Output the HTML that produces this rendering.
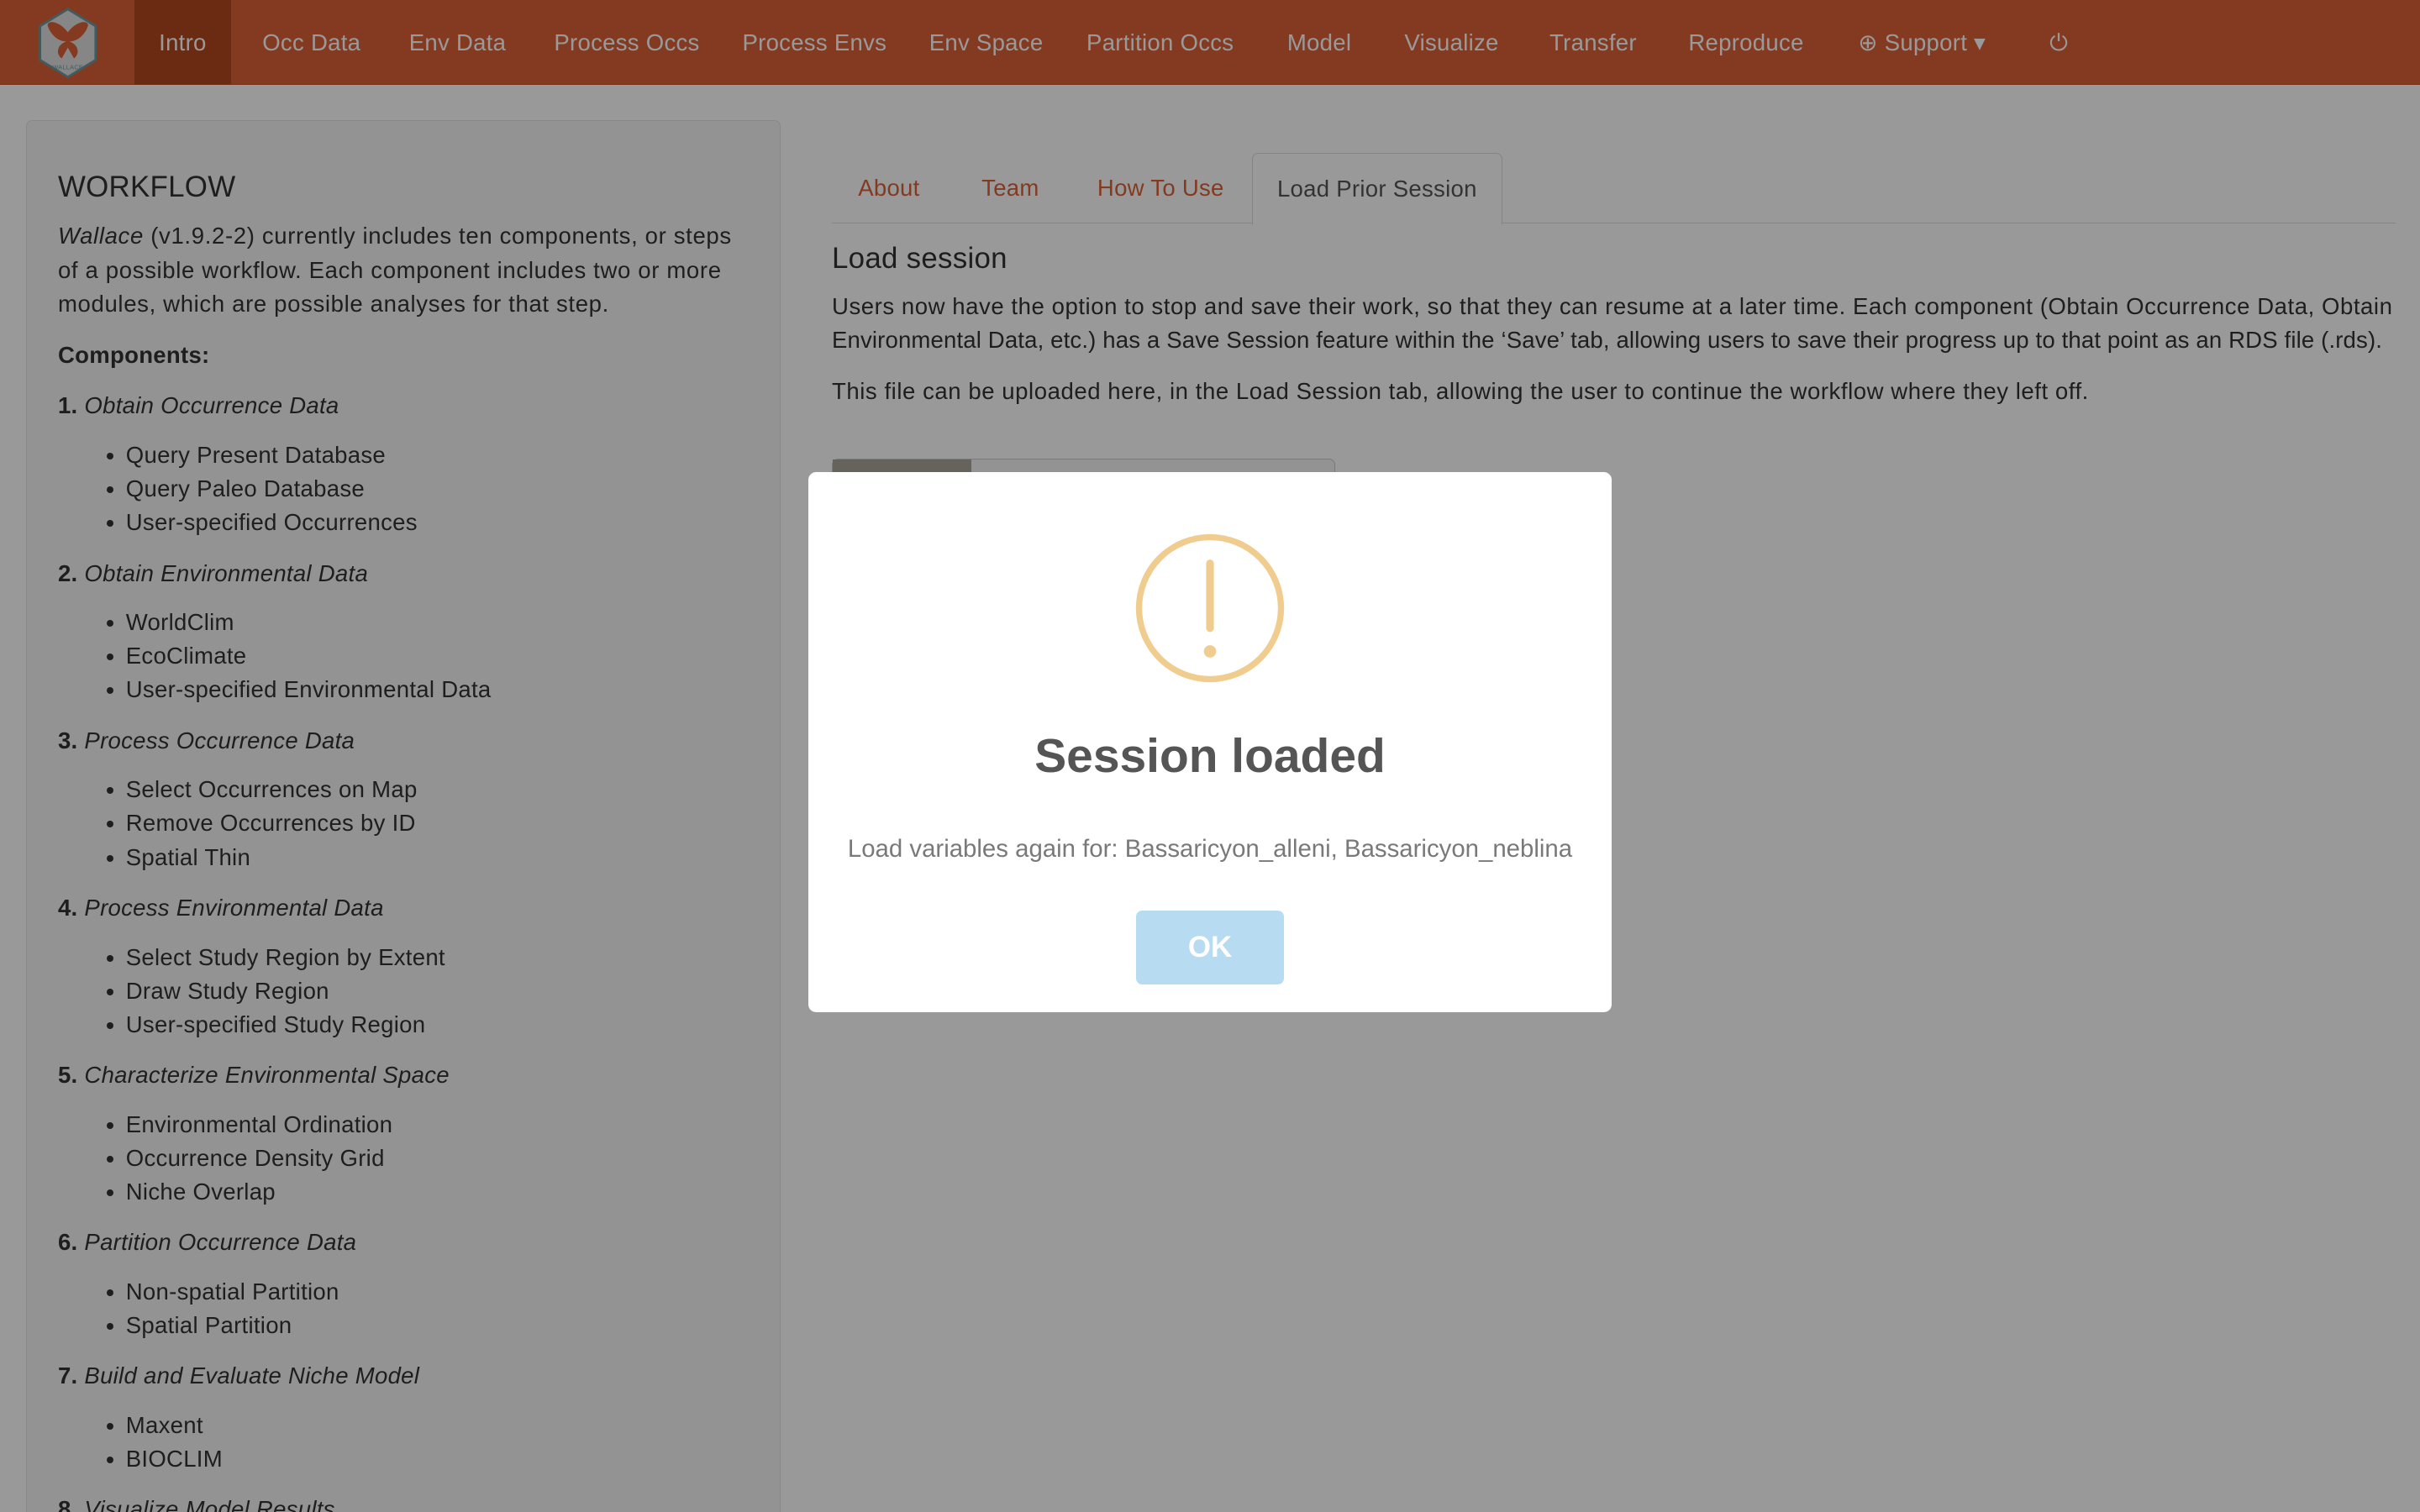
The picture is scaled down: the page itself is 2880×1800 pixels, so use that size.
<!DOCTYPE html>
<html><head><meta charset="utf-8"><style>
*{box-sizing:border-box;margin:0;padding:0}
html,body{width:2880px;height:1800px;overflow:hidden;background:#fff}
#w{width:1568px;height:980px;zoom:1.836735;position:relative;font-family:"Liberation Sans",sans-serif;color:#333;font-size:15px;background:#fff;overflow:hidden;letter-spacing:0.15px}
.nav{position:absolute;left:0;top:0;width:1568px;height:55px;background:#dc6137;border-bottom:1px solid #c5532c}
.nav a{position:absolute;top:0;height:55px;line-height:55px;color:#fff;font-size:15px;text-decoration:none}
.act{background:#b3481f;padding:0 16px}
.side{position:absolute;left:17px;top:78px;width:489px;height:920px;background:#f5f5f5;border:1px solid #e3e3e3;border-radius:4px;padding:32px 20px 30px 20px}
.side h3{font-size:19px;font-weight:normal;margin-bottom:10px}
.side p{line-height:22px;margin-bottom:11px}
.side p.first{padding-right:8px;letter-spacing:0.35px}
.side ul{margin:-1px 0 11px 44px;line-height:21.8px}
.main{position:absolute;left:539px;top:99px;width:1013px}
.tabs{height:46px;border-bottom:1px solid #ddd;position:relative}
.tabs span{position:absolute;top:0;height:46px;line-height:46px;color:#dc6137;font-size:15px}
.tabs .on{border:1px solid #ddd;border-bottom:1px solid #fff;background:#fff;color:#555;padding:0 16px;border-radius:4px 4px 0 0;height:47px}
.main h4{font-size:19px;font-weight:normal;margin:12px 0 9px}
.main p{line-height:22px;margin-bottom:11px;letter-spacing:0.3px;white-space:nowrap}
.ov{position:absolute;left:0;top:0;width:1568px;height:980px;background:rgba(0,0,0,.4)}
.dlg{position:absolute;left:524px;top:306px;width:520px;height:350px;background:#fff;border-radius:5px;text-align:center;letter-spacing:0}
.ok{position:absolute;left:212px;top:284px;width:96px;height:48px;background:#b7dcf1;border-radius:4px;color:#fff;font-weight:bold;font-size:19px;line-height:48px}
</style></head><body><div id="w">
<div class="nav">
<svg style="position:absolute;left:24px;top:5px" width="40" height="46" viewBox="0 0 40 46"><polygon points="20,1 38,12 38,34 20,45 2,34 2,12" fill="#e0e0e0" stroke="#6b9aa0" stroke-width="1.5"/><path d="M20 16 C14 8 6 8 7 12 C9 18 14 22 19 22 C13 24 12 30 16 33 L20 26 L24 33 C28 30 27 24 21 22 C26 22 31 18 33 12 C34 8 26 8 20 16Z" fill="#dc6137"/><text x="20" y="40" font-size="4" text-anchor="middle" fill="#6b9aa0" font-family="Liberation Sans">WALLACE</text></svg>
<a class="act" style="left:87px">Intro</a>
<a style="left:170px">Occ Data</a><a style="left:265px">Env Data</a><a style="left:359px">Process Occs</a><a style="left:481px">Process Envs</a><a style="left:602px">Env Space</a><a style="left:704px">Partition Occs</a><a style="left:834px">Model</a><a style="left:910px">Visualize</a><a style="left:1004px">Transfer</a><a style="left:1094px">Reproduce</a><a style="left:1204px">⊕ Support ▾</a><a style="left:1328px">⏻</a>
</div>
<div class="side">
<h3>WORKFLOW</h3>
<p class="first"><i>Wallace</i> (v1.9.2-2) currently includes ten components, or steps of a possible workflow. Each component includes two or more modules, which are possible analyses for that step.</p>
<p><b>Components:</b></p>
<p><b>1.</b> <i>Obtain Occurrence Data</i></p><ul><li>Query Present Database</li><li>Query Paleo Database</li><li>User-specified Occurrences</li></ul>
<p><b>2.</b> <i>Obtain Environmental Data</i></p><ul><li>WorldClim</li><li>EcoClimate</li><li>User-specified Environmental Data</li></ul>
<p><b>3.</b> <i>Process Occurrence Data</i></p><ul><li>Select Occurrences on Map</li><li>Remove Occurrences by ID</li><li>Spatial Thin</li></ul>
<p><b>4.</b> <i>Process Environmental Data</i></p><ul><li>Select Study Region by Extent</li><li>Draw Study Region</li><li>User-specified Study Region</li></ul>
<p><b>5.</b> <i>Characterize Environmental Space</i></p><ul><li>Environmental Ordination</li><li>Occurrence Density Grid</li><li>Niche Overlap</li></ul>
<p><b>6.</b> <i>Partition Occurrence Data</i></p><ul><li>Non-spatial Partition</li><li>Spatial Partition</li></ul>
<p><b>7.</b> <i>Build and Evaluate Niche Model</i></p><ul><li>Maxent</li><li>BIOCLIM</li></ul>
<p><b>8.</b> <i>Visualize Model Results</i></p>
</div>
<div class="main">
<div class="tabs"><span style="left:17px">About</span><span style="left:97px">Team</span><span style="left:172px">How To Use</span><span class="on" style="left:272px">Load Prior Session</span></div>
<h4>Load session</h4>
<p>Users now have the option to stop and save their work, so that they can resume at a later time. Each component (Obtain Occurrence Data, Obtain<br><span style="letter-spacing:0.08px">Environmental Data, etc.) has a Save Session feature within the ‘Save’ tab, allowing users to save their progress up to that point as an RDS file (.rds).</span></p>
<p>This file can be uploaded here, in the Load Session tab, allowing the user to continue the workflow where they left off.</p>
<div style="position:absolute;left:0;top:198px;width:326px;height:12px;border:1px solid #ccc;border-radius:4px;background:#f5f5f5"><div style="width:90px;height:100%;background:#aaa49a"></div></div>
</div>
<div class="ov"></div>
<div class="dlg">
<svg style="position:absolute;left:211px;top:39px" width="98" height="98" viewBox="0 0 98 98"><circle cx="49" cy="49" r="46" fill="none" stroke="#f0cd8f" stroke-width="4"/><line x1="49" y1="20" x2="49" y2="62" stroke="#f0cd8f" stroke-width="5" stroke-linecap="round"/><circle cx="49" cy="77" r="4" fill="#f0cd8f"/></svg>
<div style="position:absolute;top:166px;width:100%;font-size:31px;font-weight:bold;color:#555">Session loaded</div>
<div style="position:absolute;top:235px;width:100%;font-size:16px;color:#797979">Load variables again for: Bassaricyon_alleni, Bassaricyon_neblina</div>
<div class="ok">OK</div>
</div>
</div></body></html>
